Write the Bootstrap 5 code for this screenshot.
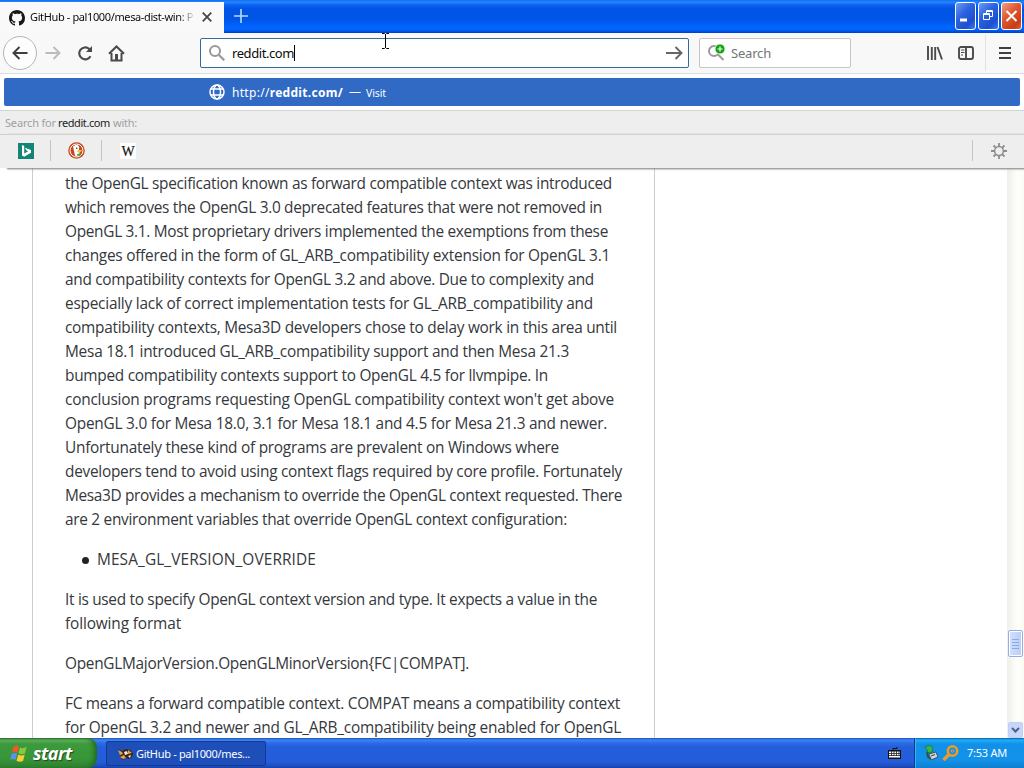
<!DOCTYPE html>
<html lang="en">
<head>
    <meta charset="UTF-8">
    <meta name="viewport" content="width=device-width, initial-scale=1.0">
    <title>GitHub - pal1000/mesa-dist-win</title>
    <link href="https://cdn.jsdelivr.net/npm/bootstrap@5.3.3/dist/css/bootstrap.min.css" rel="stylesheet">
    <style>
        body { width: 1024px; height: 768px; overflow: hidden; font-family: "Noto Sans", sans-serif; font-size: 11px; color: #0c0c0d; }
        svg { display: block; flex: none; }
        [data-w] { white-space: nowrap; flex: none; }

        .titlebar { height: 33px; background: linear-gradient(#0a70f0 0, #2a85ff 2px, #0a62f2 5px, #0053e3 9px, #0054e6 19px, #0066ff 27px, #0062f8 30px, #003dc4 33px); }
        .tab { width: 224px; height: 31px; margin-top: 2px; padding-left: 9px; background: #f9f9fa; }
        .tab-title { width: 164px; margin: 0 8px 0 5px; -webkit-mask-image: linear-gradient(90deg, #000 148px, transparent 166px); }
        .tab-close { margin-top: -1px; }
        .new-tab { margin: 9px 0 0 10px; }
        .win-btns { gap: 2px; padding: 2px 2px 0 0; }
        .win-btn { width: 21px; height: 28px; border: 1px solid #fff; border-radius: 3px; background: linear-gradient(135deg, #6f9cf5, #2b62e0 40%, #1c4fd0 75%, #3b7cf5); }
        .win-close { background: linear-gradient(135deg, #f0a088, #e05a35 40%, #c83c14 80%, #e06840); }

        .toolbar { height: 41px; background: #f8f8f9; border-bottom: 1px solid #dcdce0; }
        .back { width: 34px; height: 34px; margin-left: 3px; border: 1px solid #b4b4b6; border-radius: 50%; background: #fdfdfe; }
        .forward { margin-left: 8px; }
        .reload { margin-left: 16px; }
        .home { margin-left: 14px; }
        .field { height: 30px; background: #fff; border: 1px solid #c6c6c8; border-radius: 2px; font-size: 13px; }
        .field span { padding-top: 1px; }
        .urlbar { width: 489px; margin-left: 75px; border-color: #336b9f; gap: 7px; padding: 0 5px 0 8px; }
        .searchbox { width: 152px; margin-left: 10px; color: #747476; gap: 5px; padding-left: 8px; }
        .caret { width: 1px; height: 16px; margin-left: -7px; background: #000; }
        .library { margin-left: 76px; }
        .sidebar-icon { margin-left: 15px; }
        .menu-box { width: 39px; height: 36px; border-left: 1px solid #e2e2e4; padding-left: 13px; }

        .results { height: 36px; padding: 4px 4px 0; background: #fff; }
        .visit-row { height: 28px; border-radius: 2px; background: #316ac5; color: #fff; padding-left: 205px; font-size: 12px; }
        .visit-url { margin: 1px 6px 0 7px; }
        .visit-label { margin-left: 4px; padding-top: 3px; font-size: 10.5px; }
        .oneoff-head { height: 24px; padding: 2px 0 0 5px; background: #eee; border-top: 1px solid #d4d4d4; color: #a0a0a0; }
        .query { margin: 0 3px 0 2px; color: #222; }
        .oneoff { height: 34px; padding-bottom: 2px; background: #eee; border-top: 1px solid #d0d0d0; position: relative; z-index: 2; box-shadow: 7px 1px 2px 0 #777; }
        .engine { width: 51px; height: 21px; border-right: 1px solid #c4c4c4; }
        .engine:first-child { padding-left: 1px; }
        .engine-settings { width: 52px; height: 21px; padding-left: 18px; border-left: 1px solid #c4c4c4; }

        .page { height: 570px; overflow: hidden; background: #fff; }
        .readme { width: 623px; height: 570px; margin-left: 32px; padding: 4px 0 0 32px; border: 1px solid #ccc; border-width: 0 1px; font-family: "Open Sans", "Noto Sans", sans-serif; font-size: 15.400px; line-height: 24px; color: #35383c; }
        .readme p, .readme ul { margin: 0 0 16px; }
        .readme span { display: table; }
        .bullet { width: 7px; height: 7px; border-radius: 50%; background: #222; margin: 0 8px 0 17px; }
        .scroll { width: 17px; padding-top: 462px; background: linear-gradient(90deg, #f0f0ea, #fefefb 60%, #fbfbf6); }
        .thumb { width: 15px; height: 27px; border: 1px solid #98aee0; border-radius: 2px; background: linear-gradient(90deg, #d3e0fd, #bacdf8); box-shadow: inset 0 0 0 1px #fff; }
        .down { width: 15px; height: 16px; border: 1px solid #c0cff4; border-radius: 2px; background: #c7d6fb; }

        .taskbar { height: 30px; background: linear-gradient(#1f50b8 0, #3b86f4 2px, #2d6be6 5px, #245edb 9px, #245cda 24px, #1d4fc0 28px, #1941a5); color: #fff; }
        .start { width: 97px; height: 30px; padding-left: 9px; border-radius: 0 9px 9px 0; background: linear-gradient(#2b6c2c 0, #5fb45f 2px, #3c9a3c 6px, #379637 20px, #2f8230 30px); box-shadow: inset -4px 0 5px -1px #1f6a24; }
        .start-word { font: italic bold 18px/20px "Open Sans", sans-serif; text-shadow: 1px 1px 1px #1d4a1d; margin-left: 4px; padding-bottom: 1px; }
        .task { width: 160px; height: 25px; margin: 1px 0 0 9px; padding: 1px 0 0 11px; gap: 3px; border: 1px solid #15399a; border-radius: 2px; background: #1e4fb9; }
        .keyboard { margin-right: 13px; }
        .tray { width: 110px; height: 30px; padding-left: 9px; gap: 3px; border-left: 1px solid #0a3a8e; background: linear-gradient(#0d5fae 0, #1fb0f5 2px, #1290e9 6px, #1192e8 22px, #0f7fd0 30px); box-shadow: inset 1px 0 #30b5f5; }
        .clock { margin-left: 5px; padding-top: 1px; }
        .pointer { position: absolute; left: 381px; top: 33px; z-index: 5; }
    </style>
    <script src="https://cdn.jsdelivr.net/npm/bootstrap@5.3.3/dist/js/bootstrap.bundle.min.js"></script>
</head>
<body class="d-flex flex-column">
    <div class="titlebar d-flex">
        <div class="tab d-flex align-items-center">
            <svg width="16" height="16" viewBox="0 0 16 16" fill="#191717"><path d="M8 0C3.58 0 0 3.58 0 8c0 3.54 2.29 6.53 5.47 7.59.4.07.55-.17.55-.38 0-.19-.01-.82-.01-1.49-2.01.37-2.53-.49-2.69-.94-.09-.23-.48-.94-.82-1.13-.28-.15-.68-.52-.01-.53.63-.01 1.08.58 1.23.82.72 1.21 1.87.87 2.33.66.07-.52.28-.87.51-1.07-1.78-.2-3.64-.89-3.64-3.95 0-.87.31-1.59.82-2.15-.08-.2-.36-1.02.08-2.12 0 0 .67-.21 2.2.82.64-.18 1.32-.27 2-.27s1.36.09 2 .27c1.53-1.04 2.2-.82 2.2-.82.44 1.1.16 1.92.08 2.12.51.56.82 1.27.82 2.15 0 3.07-1.87 3.75-3.65 3.95.29.25.54.73.54 1.48 0 1.07-.01 1.93-.01 2.2 0 .21.15.46.55.38A8.01 8.01 0 0 0 16 8c0-4.42-3.58-8-8-8z"/></svg>
            <div class="tab-title"><span data-w="163">GitHub - pal1000/mesa-dist-win: P</span></div>
            <svg class="tab-close" width="10" height="10" viewBox="0 0 10 10" stroke="#444" stroke-width="1.7"><path d="M.7.7l8.6 8.6M9.3.7L.7 9.3"/></svg>
        </div>
        <svg class="new-tab" width="14" height="14" viewBox="0 0 14 14" stroke="#b5dcff" stroke-width="1.6"><path d="M7 0v14M0 7h14"/></svg>
        <div class="win-btns d-flex ms-auto">
            <div class="win-btn"><svg width="19" height="26"><path d="M4 15.500h7v3H4z" fill="#fff"/></svg></div>
            <div class="win-btn"><svg width="19" height="26" fill="none" stroke="#fff"><path d="M7.500 10V7.500h6v6h-2.500M7 8.500h7M4.500 10.500h6v6h-6zM4 11.500h7"/></svg></div>
            <div class="win-btn win-close"><svg width="19" height="26" stroke="#fff" stroke-width="2"><path d="M4.500 8l10 10M14.500 8l-10 10"/></svg></div>
        </div>
    </div>

    <div class="toolbar d-flex align-items-center">
        <div class="back d-flex align-items-center justify-content-center">
            <svg width="16" height="14" viewBox="0 0 16 14" fill="none" stroke="#3f3f41" stroke-width="2"><path d="M15.500 7H1.500M7.500 1l-6 6 6 6"/></svg>
        </div>
        <svg class="forward" width="16" height="14" viewBox="0 0 16 14" fill="none" stroke="#bbb" stroke-width="1.900"><path d="M.5 7h14M8.500 1l6 6-6 6"/></svg>
        <svg class="reload" width="17" height="16" viewBox="0 0 17 16" fill="none" stroke="#4a4a4c" stroke-width="2.100"><path d="M13.500 11.300A6 6 0 1 1 12 3.700l1.500 1.600"/><path d="M15 1v6H9z" fill="#4a4a4c" stroke="none"/></svg>
        <svg class="home" width="17" height="17" viewBox="0 0 17 17" fill="none" stroke="#4a4a4c" stroke-width="2"><path d="M1 8.800l7.500-7.300L16 8.800M3.500 8v7.500h10V8"/><path d="M7 9h3v6H7z" fill="#4a4a4c" stroke="none"/></svg>
        <div class="field urlbar d-flex align-items-center">
            <svg width="16" height="16" viewBox="0 0 16 16" fill="none" stroke="#999" stroke-width="2"><circle cx="6" cy="6" r="5"/><path d="M9.700 9.700l5.600 5.600" stroke-width="2.200"/></svg>
            <span data-w="62">reddit.com</span><i class="caret"></i>
            <svg class="ms-auto" width="17" height="14" viewBox="0 0 17 14" fill="none" stroke="#666" stroke-width="1.900"><path d="M0 7h15.500M9.500 1l6 6-6 6"/></svg>
        </div>
        <div class="field searchbox d-flex align-items-center">
            <svg width="18" height="18" viewBox="0 0 18 18" fill="none"><path d="M10 10.500l5.500 5.500" stroke="#999" stroke-width="2"/><circle cx="6" cy="7" r="5" stroke="#999" stroke-width="1.900"/><circle cx="12" cy="5" r="5" fill="#12a410" stroke="#f9f9fa" stroke-width=".8"/><path d="M12 2.500v5M9.500 5h5" stroke="#fff" stroke-width="1.200"/></svg>
            <span data-w="40">Search</span>
        </div>
        <svg class="library" width="16" height="14" viewBox="0 0 16 14" stroke="#4a4a4c" stroke-width="1.900"><path d="M1 0v14M4.800 1v13M8.200 1v13M10.500 1L15 13.500"/></svg>
        <svg class="sidebar-icon" width="16" height="14" viewBox="0 0 16 14" fill="none" stroke="#4a4a4c" stroke-width="1.900"><rect x="1" y="1" width="14" height="12" rx="2"/><path d="M8 1v12"/><path d="M3 4h3.500M3 6.500h3.500M3 9h2" stroke-width="1"/></svg>
        <div class="menu-box ms-auto d-flex align-items-center">
            <svg width="12" height="12" fill="#3f3f41"><path d="M0 0h12v2H0zM0 5h12v2H0zM0 10h12v2H0z"/></svg>
        </div>
    </div>

    <div class="results">
        <div class="visit-row d-flex align-items-center">
            <svg width="16" height="16" viewBox="0 0 16 16" fill="none" stroke="#fff" stroke-width="1.500"><circle cx="8" cy="8" r="7"/><ellipse cx="8" cy="8" rx="3.500" ry="7"/><path d="M2 5h12M2 11h12"/></svg>
            <span class="visit-url" data-w="111">http://<b>reddit.com/</b></span>
            <span data-w="13">—</span>
            <span class="visit-label" data-w="20">Visit</span>
        </div>
    </div>
    <div class="oneoff-head d-flex align-items-center">
        <span data-w="51">Search for</span><span class="query" data-w="52">reddit.com</span><span data-w="24">with:</span>
    </div>
    <div class="oneoff d-flex align-items-center">
        <div class="engine d-flex align-items-center justify-content-center">
            <svg width="16" height="16"><path d="M0 0h16v16H0z" fill="#128576"/><path d="M4 2l2.200 1v7.500l4-2.200-2-1L7 4.800l6 2.200v2.700L6.200 13.800 4 12.500z" fill="#fff"/></svg>
        </div>
        <div class="engine d-flex align-items-center justify-content-center">
            <svg width="17" height="17" viewBox="0 0 17 17"><circle cx="8.500" cy="8.500" r="8.300" fill="#c8451f"/><circle cx="8.500" cy="8.500" r="6.500" fill="#c8451f" stroke="#fff" stroke-width="1"/><path d="M5 4.500l3-1.700C11 3 11.500 5 11 8l1 5-3 1.500-2-1z" fill="#fff"/><circle cx="8.700" cy="6.200" r=".8" fill="#263a60"/><path d="M9 8.500l5-.8-1 2-3.500.8z" fill="#fbc32a"/><path d="M9 12l3.500-.8v2.500L9.500 14z" fill="#4aa43c"/></svg>
        </div>
        <div class="engine d-flex align-items-center justify-content-center border-0">
            <svg width="16" height="16"><path d="M0 0h16v16H0z" fill="#fff"/><text x="8" y="13" text-anchor="middle" font-family="Liberation Serif, serif" font-size="14" fill="#111" stroke="#111" stroke-width=".2">W</text></svg>
        </div>
        <div class="engine-settings ms-auto d-flex align-items-center">
            <svg width="16" height="16" viewBox="0 0 16 16" fill="none" stroke="#8d8d8d"><circle cx="8" cy="8" r="4.400" stroke-width="1.500"/><path d="M8 0v3.500M8 12.500V16M0 8h3.500M12.500 8H16M2.500 2.500l2.200 2.200M11.300 11.300l2.200 2.200M13.500 2.500l-2.200 2.200M4.700 11.300l-2.200 2.200" stroke-width="1.800"/></svg>
        </div>
    </div>

    <div class="page d-flex">
        <div class="readme" id="readme"></div>
        <div class="scroll ms-auto d-flex flex-column align-items-center">
            <div class="thumb d-flex align-items-center justify-content-center">
                <svg width="8" height="10" stroke="#8ea9e8"><path d="M0 .5h7M0 3.500h7M0 6.500h7M0 9.500h7"/></svg>
            </div>
            <div class="down mt-auto d-flex align-items-center justify-content-center">
                <svg width="9" height="7" fill="none" stroke="#4d6185" stroke-width="2"><path d="M1 1l3.500 3.500L8 1"/></svg>
            </div>
        </div>
    </div>

    <div class="taskbar d-flex align-items-center">
        <div class="start d-flex align-items-center">
            <svg width="20" height="19" viewBox="0 0 20 19"><path d="M4.500 2.500Q7.500.5 10 2.500L8.500 8.500Q5.500 7 3 8.500z" fill="#ee582b"/><path d="M11 3.500Q14 5 17.500 3L16 9.500Q13 11 9.500 9.300z" fill="#85c93c"/><path d="M2.700 9.800Q5.500 8 8.200 9.800L6.500 16Q4 14 1 16z" fill="#5b8ff0"/><path d="M9.200 10.700Q12.500 12.300 15.700 10.700L14 17Q11 18.500 7.500 16.800z" fill="#fbce35"/></svg>
            <span class="start-word" data-w="39">start</span>
        </div>
        <div class="task d-flex align-items-center">
            <svg width="15" height="13" viewBox="0 0 15 13"><path d="M0 1l4 2 4-2 4 1 3 3-1 4-3 2-3-1-3 2-3-3 1-3z" fill="#38261a"/><path d="M0 2l4 2 1 2-3 1zM10 2l4 3-4 1zM2 9l4-2 2 3-3 1z" fill="#e9a04a"/><path d="M6 4l3-1 1 3-3 1zM10 8l3-1-1 3z" fill="#f6ead5"/></svg>
            <span data-w="114">GitHub - pal1000/mes...</span>
        </div>
        <svg class="keyboard ms-auto" width="13" height="13" viewBox="0 0 13 13"><path d="M5 3V1.500h4V0" stroke="#111" fill="none"/><path d="M0 3h13v9H0z" fill="#111"/><path d="M1 4.500h11v6H1z" fill="#fff"/><path d="M1 6.500h11M1 8.500h11M3.500 4v5M6 4v5M8.500 4v5M11 4v5" stroke="#222" stroke-width=".8"/></svg>
        <div class="tray d-flex align-items-center">
            <svg width="15" height="16" viewBox="0 0 15 16"><path d="M5 9l7-2 2 5-7 3z" fill="#ced6dd" stroke="#435264"/><path d="M7 11l4-1.500" stroke="#345"/><path d="M1 2l5-2 3 4-1 3-4 1-1-3z" fill="#39b54a" stroke="#16702a" stroke-width=".7"/><path d="M3 7l1 5 3 2" stroke="#245c3a" stroke-width="2" fill="none"/></svg>
            <svg width="17" height="16" viewBox="0 0 17 16" fill="none" stroke="#f09a26"><circle cx="10.500" cy="6" r="4.700" stroke-width="2.600"/><path d="M7 9.500L1.500 15" stroke-width="3.400"/><circle cx="10.500" cy="6" r="1.300" stroke-width="1"/></svg>
            <span class="clock" data-w="40">7:53 AM</span>
        </div>
    </div>

    <svg class="pointer" width="9" height="16" fill="none" stroke="#000"><path d="M1 .5h2.500l1 1 1-1H8M4.500 1v14M1 15.500h2.500l1-1 1 1H8"/></svg>

    <script>
        // each line: [text, width in px]
        const blocks = [
            { tag: 'p', lines: [
                ['the OpenGL specification known as forward compatible context was introduced', 547],
                ['which removes the OpenGL 3.0 deprecated features that were not removed in', 537],
                ['OpenGL 3.1. Most proprietary drivers implemented the exemptions from these', 543],
                ['changes offered in the form of GL_ARB_compatibility extension for OpenGL 3.1', 545],
                ['and compatibility contexts for OpenGL 3.2 and above. Due to complexity and', 529],
                ['especially lack of correct implementation tests for GL_ARB_compatibility and', 528],
                ['compatibility contexts, Mesa3D developers chose to delay work in this area until', 552],
                ['Mesa 18.1 introduced GL_ARB_compatibility support and then Mesa 21.3', 504],
                ['bumped compatibility contexts support to OpenGL 4.5 for llvmpipe. In', 483],
                ['conclusion programs requesting OpenGL compatibility context won\'t get above', 549],
                ['OpenGL 3.0 for Mesa 18.0, 3.1 for Mesa 18.1 and 4.5 for Mesa 21.3 and newer.', 542],
                ['Unfortunately these kind of programs are prevalent on Windows where', 494],
                ['developers tend to avoid using context flags required by core profile. Fortunately', 557],
                ['Mesa3D provides a mechanism to override the OpenGL context requested. There', 557],
                ['are 2 environment variables that override OpenGL context configuration:', 502]
            ] },
            { tag: 'ul', lines: [['MESA_GL_VERSION_OVERRIDE', 219]] },
            { tag: 'p', lines: [
                ['It is used to specify OpenGL context version and type. It expects a value in the', 532],
                ['following format', 116]
            ] },
            { tag: 'p', lines: [['OpenGLMajorVersion.OpenGLMinorVersion{FC|COMPAT].', 404]] },
            { tag: 'p', lines: [
                ['FC means a forward compatible context. COMPAT means a compatibility context', 555],
                ['for OpenGL 3.2 and newer and GL_ARB_compatibility being enabled for OpenGL', 556]
            ] }
        ];

        const readme = document.getElementById('readme');
        readme.innerHTML = blocks.map(block => {
            const lines = block.lines.map(([text, w]) => `<span data-w="${w}">${text}</span>`).join('');
            if (block.tag === 'ul') {
                return `<ul class="list-unstyled"><li class="d-flex align-items-center"><i class="bullet"></i>${lines}</li></ul>`;
            }
            return `<p>${lines}</p>`;
        }).join('');

        // spread the letters so that each line keeps its set width
        document.querySelectorAll('[data-w]').forEach(el => {
            const range = document.createRange();
            range.selectNodeContents(el);
            const natural = range.getBoundingClientRect().width;
            el.style.letterSpacing = (el.dataset.w - natural) / el.textContent.length + 'px';
        });
    </script>
</body>
</html>
